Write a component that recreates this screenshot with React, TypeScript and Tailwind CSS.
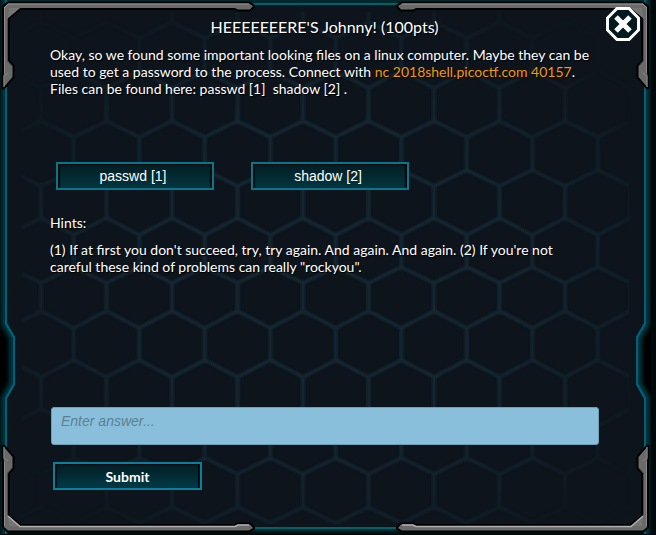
import { FC } from "react"

interface ICorner {
    className: string
    flipped?: boolean
}

interface IFileButton {
    label: string
}

// y range of the upright edges, odd rows are shifted by half a cell
const hexRows = [
    [-10, 22],
    [38, 71],
    [88, 121],
    [137, 170],
    [186, 218],
    [235, 267],
    [283, 311],
    [328, 360],
    [377, 409],
    [426, 458],
    [474, 507],
    [523, 556],
]

const hexPath = hexRows
    .map(([top, bottom], row) => {
        const start = row % 2 === 0 ? 41 : 8.25
        const next = hexRows[row + 1]
        let d = ""
        for (let i = 0; i < 11; i++) {
            const x = start + i * 65.5
            d += `M${x} ${top}V${bottom}`
            if (next) d += `M${x - 32.75} ${next[0]}L${x} ${bottom}L${x + 32.75} ${next[0]}`
        }
        return d
    })
    .join("")

const HexBackground: FC = () => {
    return (
        <svg className="absolute inset-0 w-full h-full" viewBox="0 0 651 534" preserveAspectRatio="none" aria-hidden="true">
            <defs>
                <radialGradient id="hexFade" cx="0.5" cy="0.52" r="0.6">
                    <stop offset="0.5" stopColor="#fff" />
                    <stop offset="0.86" stopColor="#fff" stopOpacity="0.5" />
                    <stop offset="1" stopColor="#fff" stopOpacity="0.1" />
                </radialGradient>
                <mask id="hexMask">
                    <rect x="22" y="12" width="607" height="512" fill="url(#hexFade)" />
                </mask>
                <filter id="hexSoft">
                    <feGaussianBlur stdDeviation="0.8" />
                </filter>
            </defs>
            <g mask="url(#hexMask)">
                <path d={hexPath} fill="none" stroke="#122831" strokeWidth="4" filter="url(#hexSoft)" style={{ colorInterpolationFilters: "sRGB" }} />
            </g>
        </svg>
    )
}

const Side: FC<{ className: string }> = ({ className }) => {
    return (
        <svg className={`absolute top-0 w-5 h-full ${className}`} viewBox="0 0 20 535" preserveAspectRatio="none" aria-hidden="true">
            <defs>
                <clipPath id="sideClip">
                    <path d="M-6 0H6V324L14 338V385L6 399V535H-6Z" />
                </clipPath>
                <filter id="sideGlow" x="-100%" width="300%">
                    <feGaussianBlur stdDeviation="2" />
                </filter>
            </defs>
            <g clipPath="url(#sideClip)">
                <rect x="-6" width="22" height="535" fill="#000" />
                <path d="M6 -10V324L14 338V385L6 399V545" fill="none" stroke="#00383f" strokeWidth="10" filter="url(#sideGlow)" />
            </g>
            <path d="M6 0V324L14 338V385L6 399V535" fill="none" stroke="#00616f" strokeWidth="2" />
            <path d="M6 300V324L14 338V385L6 399V420" fill="none" stroke="#005f7c" strokeWidth="2" />
        </svg>
    )
}

const Corner: FC<ICorner> = ({ className, flipped }) => {
    return (
        <svg className={`absolute w-[260px] h-[92px] ${className}`} viewBox="0 0 260 92" aria-hidden="true">
            <path
                d="M4 7L8 3.5H249L253 6L250 9.5H238L235 8H20L8 18V61L12.5 66V77L3.5 87.5V75L4 73Z"
                fill="#6a6a6a"
                stroke="#000"
                strokeWidth="4"
                strokeLinejoin="round"
                paintOrder="stroke"
            />
            <path d="M8 18L20 8H9Z" fill="#757575" />
            {flipped ? (
                <path d="M8 18L20 7.5H235L238 9H249" fill="none" stroke="#b0b0b0" strokeWidth="1.5" />
            ) : (
                <path d="M4.5 8L8 4H249" fill="none" stroke="#9a9a9a" />
            )}
            <path d="M4.5 8V73" fill="none" stroke="#8a8a8a" />
            <path d="M7.5 19V61L12 66" fill="none" stroke="#484848" />
            <path d="M4 87L4 76L8 73" fill="none" stroke="#868686" />
        </svg>
    )
}

const FileButton: FC<IFileButton> = ({ label }) => {
    return (
        <button className="w-[158px] h-7 pr-1 border-2 border-[#08758a] bg-linear-to-b from-[#021e23] to-[#01363f] shadow-[inset_2px_1px_1px_#00090b,inset_-2px_0_1px_#00090b] text-white text-[14px] leading-[17px] font-['Liberation_Sans',sans-serif]">
            {label}
        </button>
    )
}

const App: FC = () => {
    return (
        <div className="w-full min-h-screen bg-[#00080a] pr-[5px] pb-px flex font-[Lato,sans-serif] text-white">
            <main className="relative grow bg-[#0d141b] overflow-hidden">
                <HexBackground />
                <div className="absolute inset-x-0 top-0 h-[5px] bg-[#00282d] border-b-2 border-[#006269]" />
                <div className="absolute inset-x-0 bottom-0 h-[7px] bg-linear-to-b from-[#00353a] to-[#00080a] border-t-2 border-[#006269]" />
                <Side className="left-0" />
                <Side className="right-0 -scale-x-100" />
                <Corner className="top-0 left-0" />
                <Corner className="top-0 right-0 -scale-x-100" />
                <Corner className="bottom-0 left-0 -scale-y-100" flipped />
                <Corner className="bottom-0 right-0 -scale-100" flipped />

                <button aria-label="Close" className="absolute top-[7px] right-[11px] w-[34px] h-[34px]">
                    <svg viewBox="0 0 34 34" className="w-full h-full" aria-hidden="true">
                        <path d="M11 1.5H23L32.5 11V23L23 32.5H11L1.5 23V11Z" fill="#02191e" stroke="#fff" strokeWidth="3" />
                        <path d="M10 10L24 24M24 10L10 24" stroke="#fff" strokeWidth="5" />
                    </svg>
                </button>

                <div className="relative flex flex-col pl-[50px] pr-[52px] pt-4 text-[14px] leading-[17px] [text-shadow:1px_1px_1px_#000]">
                    <h1 className="text-[16px] leading-[22px] text-center">HEEEEEEERE'S Johnny! (100pts)</h1>
                    <p className="mt-2">
                        Okay, so we found some important looking files on a linux computer. Maybe they can be used to get a password to the process. Connect with{" "}
                        <span className="text-[#f59a00]">nc 2018shell.picoctf.com 40157</span>. <br />
                        Files can be found here: passwd [1]&nbsp; shadow [2] .
                    </p>
                    <div className="flex gap-[37px] mt-[65px] pl-1.5">
                        <FileButton label="passwd [1]" />
                        <FileButton label="shadow [2]" />
                    </div>
                    <h2 className="mt-6">Hints:</h2>
                    <p className="mt-2.5 pr-4">
                        (1) If at first you don't succeed, try, try again. And again. And again. (2) If you're not careful these kind of problems can really "rockyou".
                    </p>
                    <textarea
                        aria-label="Answer"
                        rows={1}
                        placeholder="Enter answer..."
                        className="mt-[132px] ml-px h-[38px] resize-none rounded-[3px] border border-[#6e9fb6] bg-[#8abfdc] px-[9px] py-[5px] text-[14px] leading-[17px] text-[#1d2f3a] placeholder:text-[#5c7f92] placeholder:italic [text-shadow:none] font-['Liberation_Sans',sans-serif]"
                    />
                    <button className="mt-[17px] ml-[3px] w-[149px] h-7 border-2 border-[#0780a0] bg-linear-to-b from-[#021e23] to-[#013a47] shadow-[inset_2px_1px_1px_#00090b,inset_-2px_0_1px_#00090b] font-bold">
                        Submit
                    </button>
                </div>
            </main>
        </div>
    )
}

export default App
